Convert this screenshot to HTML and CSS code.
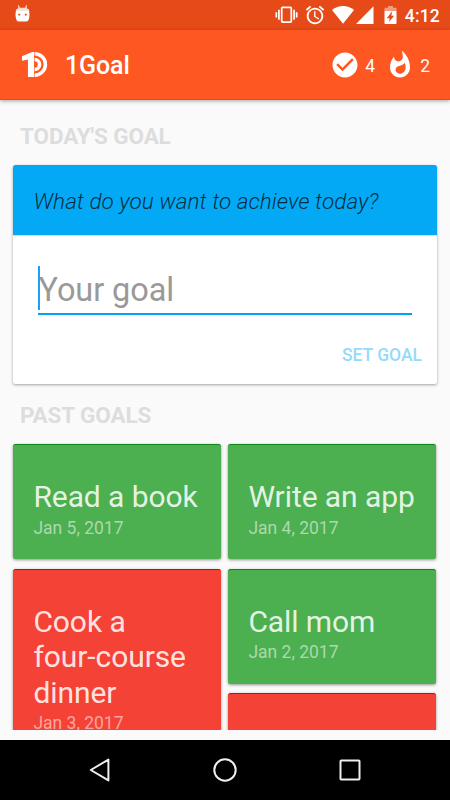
FILE: index.html
```html
<!DOCTYPE html>
<html lang="en">
<head>
<meta charset="utf-8">
<title>1Goal</title>
<link rel="stylesheet" href="styles.css">
</head>
<body>
<div class="screen">
  <div class="status-bar">
    <svg class="debug-icon" viewBox="0 0 16 18"><path fill="#fff" d="M1 6.2V4.8L3.5 3.5 3.2.3 4.2.2 5.2 2.8h5.6L11.8.2l1 .1-.3 3.2L15 4.8v1.4z" opacity=".8"/><path fill="#fff" d="M1 6h14c.9 4 .4 7.500-.7 10.200C13.800 17.200 13 17.400 12 17.400H4c-1 0-1.800-.2-2.300-1.200C.6 13.500.1 10 1 6z"/><path fill="#e64a19" d="M3.500 9.200h2V11h-2zM10.500 9.200h2V11h-2z"/></svg>
    <div class="status-icons">
      <svg class="vibrate" viewBox="0 0 24 20"><rect x="7" y="2" width="10" height="15.500" rx="1" fill="none" stroke="#fff" stroke-width="1.800"/><path d="M4.100 4.500v10.500M19.900 4.500v10.500M1.400 7v5.500M22.600 7v5.500" stroke="#fff" stroke-width="1.800"/></svg>
      <svg class="alarm" viewBox="0 0 24 24"><path fill="#fff" d="M22 5.720l-4.600-3.860-1.290 1.530 4.600 3.860L22 5.720zM7.880 3.390L6.600 1.860 2 5.710l1.290 1.530 4.590-3.850zM12.500 8H11v6l4.750 2.850.75-1.230-4-2.370V8zM12 4c-4.970 0-9 4.030-9 9s4.020 9 9 9c4.970 0 9-4.030 9-9s-4.030-9-9-9zm0 16c-3.870 0-7-3.130-7-7s3.130-7 7-7 7 3.130 7 7-3.130 7-7 7z"/></svg>
      <svg class="wifi" viewBox="0 0 22 18"><path fill="#fff" d="M0 4.100C6.500-1.300 15.500-1.300 22 4.100L11 17.700z"/></svg>
      <svg class="signal" viewBox="0 0 18 18"><path fill="#fff" d="M0 18L17.500.2V18z"/></svg>
      <svg class="battery" viewBox="0 0 12 18"><path fill="#fff" opacity=".45" d="M3.500 0h5v1.800H12V5H0V1.800h3.500z"/><path fill="#fff" d="M0 5h12v12.200q0 .8-.8.8H.8Q0 18 0 17.200z"/><path fill="#e64a19" d="M7.800 5L2.300 12.200h3L4.200 16.200 9.700 9.700H6.800z"/></svg>
      <span class="clock">4:12</span>
    </div>
  </div>
  <header class="app-bar">
    <svg class="logo" viewBox="0 0 27 27"><path fill="#fff" d="M0 5L10.500.4H12.500V26.500H6.200V8.200L0 9.700z"/><path fill="#fff" d="M13.100.4a13.050 13.050 0 0 1 0 26.100v-3.700a9.350 9.350 0 0 0 0-18.700z"/><path fill="#fff" d="M13.100 6.500a7 7 0 0 1 0 14v-3.700a3.300 3.300 0 0 0 0-6.600z"/></svg>
    <h1 class="app-title">1Goal</h1>
    <div class="stats">
      <svg class="stat-icon" viewBox="0 0 24 24"><path fill="#fff" d="M12 2C6.480 2 2 6.480 2 12s4.480 10 10 10 10-4.480 10-10S17.520 2 12 2zm-2 15l-5-5 1.410-1.410L10 14.170l7.590-7.590L19 8l-9 9z"/></svg>
      <span class="stat-value">4</span>
      <svg class="stat-icon" viewBox="0 0 24 24"><path fill="#fff" d="M13.500.67s.74 2.650.74 4.800c0 2.060-1.350 3.730-3.410 3.730-2.070 0-3.630-1.670-3.630-3.730l.03-.36C5.210 7.510 4 10.620 4 14c0 4.420 3.580 8 8 8s8-3.580 8-8C20 8.610 17.410 3.800 13.500.67zM11.710 19c-1.780 0-3.220-1.400-3.220-3.140 0-1.620 1.050-2.760 2.810-3.120 1.770-.36 3.600-1.210 4.620-2.580.39 1.290.59 2.650.59 4.040 0 2.650-2.150 4.800-4.800 4.800z"/></svg>
      <span class="stat-value">2</span>
    </div>
  </header>
  <main class="content">
    <h2 class="section-title">TODAY'S GOAL</h2>
    <section class="today-card">
      <div class="question">What do you want to achieve today?</div>
      <div class="field"><span class="hint">Your goal</span></div>
      <div class="actions"><span class="set-goal">SET GOAL</span></div>
    </section>
    <h2 class="section-title past">PAST GOALS</h2>
    <div class="goals">
      <div class="column">
        <article class="goal done"><h3 class="goal-name">Read a book</h3><p class="goal-date">Jan 5, 2017</p></article>
        <article class="goal missed"><h3 class="goal-name">Cook a<br>four-course<br>dinner</h3><p class="goal-date">Jan 3, 2017</p></article>
      </div>
      <div class="column">
        <article class="goal done"><h3 class="goal-name">Write an app</h3><p class="goal-date">Jan 4, 2017</p></article>
        <article class="goal done"><h3 class="goal-name">Call mom</h3><p class="goal-date">Jan 2, 2017</p></article>
        <article class="goal missed"></article>
      </div>
    </div>
  </main>
  <nav class="nav-bar">
    <svg class="nav-icon" viewBox="0 0 26 26"><path d="M3.800 13L21.400 2.600V23.400z" fill="none" stroke="#eee" stroke-width="2" stroke-linejoin="round"/></svg>
    <svg class="nav-icon" viewBox="0 0 26 26"><circle cx="13" cy="13" r="10.700" fill="none" stroke="#eee" stroke-width="2"/></svg>
    <svg class="nav-icon" viewBox="0 0 26 26"><rect x="3.500" y="3.500" width="19" height="19" rx=".8" fill="none" stroke="#eee" stroke-width="2"/></svg>
  </nav>
</div>
</body>
</html>
```
FILE: styles.css
```css
* { box-sizing: border-box; }
body, h1, h2, h3, p { margin: 0; }
body { font-family: Roboto, sans-serif; background: #fafafa; }
svg { display: block; flex: none; }
.screen { width: 450px; height: 800px; display: flex; flex-direction: column; overflow: hidden; }

.status-bar { height: 30px; flex: none; background: #e64a19; display: flex; justify-content: space-between; padding: 5px 10px 0 15px; }
.debug-icon { width: 15px; height: 17px; }
.status-icons { display: flex; }
.vibrate { width: 23px; height: 20px; }
.alarm { width: 22px; height: 22px; margin: -1px 0 0 6px; }
.wifi { width: 22px; height: 18px; margin: 1px 0 0 6px; }
.signal { width: 18px; height: 18px; margin: 1px 0 0 2px; }
.battery { width: 13px; height: 18px; margin: 1px 0 0 10px; }
.clock { margin-left: 8px; color: #fff; font-size: 17.500px; font-weight: 500; line-height: 22px; letter-spacing: .2px; }

.app-bar { height: 70px; flex: none; background: #ff5722; border-bottom: 1px solid #f04713; display: flex; align-items: center; padding: 0 20px 0 22px; color: #fff; box-shadow: 0 1px 4px rgba(0, 0, 0, .35); z-index: 1; }
.logo { width: 26px; height: 27px; }
.app-title { margin: 3px 0 0 17px; font-size: 25px; line-height: 30px; font-weight: 500; letter-spacing: -.1px; }
.stats { display: flex; align-items: center; margin-left: auto; }
.stat-icon { width: 30px; height: 30px; }
.stat-value { margin: 3px 0 0 5px; font-size: 17.500px; line-height: 22px; }
.stat-value + .stat-icon { margin-left: 10px; }

.content { height: 630px; flex: none; overflow: hidden; padding: 23px 13px 0; }
.section-title { padding-left: 7px; font-size: 22.500px; line-height: 27px; font-weight: 700; letter-spacing: -.12px; color: #ddd; }
.today-card { margin-top: 15px; height: 219px; background: #fff; border-radius: 2.500px; box-shadow: 0 1px 3px rgba(0, 0, 0, .36); overflow: hidden; }
.question { height: 71px; padding: 0 20.500px; background: #03a9f4; border-bottom: 1px solid #d4dde4; font-size: 22.500px; line-height: 73px; font-style: italic; font-weight: 300; letter-spacing: .04px; color: rgba(0, 0, 0, .75); white-space: nowrap; }
.field { display: flex; margin: 30px 25px 0; height: 49px; border-bottom: 2px solid #03a0f4; }
.hint { height: 44px; border-left: 2px solid #1c9ff5; font-size: 32.500px; line-height: 49px; letter-spacing: -.08px; color: #999; text-indent: -1.500px; white-space: nowrap; }
.actions { display: flex; justify-content: flex-end; padding: 29px 15px 0; }
.set-goal { font-size: 17.500px; line-height: 22px; font-weight: 500; color: #96dafb; }
.past { margin-top: 18px; }
.goals { display: grid; grid-template-columns: 208px 208px; column-gap: 7px; margin: 15px 0 0 .4px; }
.column { display: flex; flex-direction: column; gap: 9.500px; }
.goal { min-height: 115px; padding: 34px 20px 20px; border-radius: 2.500px; box-shadow: 0 1px 3px rgba(0, 0, 0, .42); }
.done { background: #4caf50; border-top: 1px solid #128518; }
.missed { background: #f44336; border-top: 1px solid #cc0b05; }
.goal-name { font-size: 30px; line-height: 35.500px; font-weight: 400; letter-spacing: -.08px; color: rgba(255, 255, 255, .87); white-space: nowrap; }
.goal-date { font-size: 17.500px; line-height: 21px; margin-top: 3px; color: rgba(255, 255, 255, .54); }

.nav-bar { height: 60px; flex: none; margin-top: 10px; background: #000; display: flex; justify-content: center; align-items: center; gap: 99px; }
.nav-icon { width: 26px; height: 26px; }
```
